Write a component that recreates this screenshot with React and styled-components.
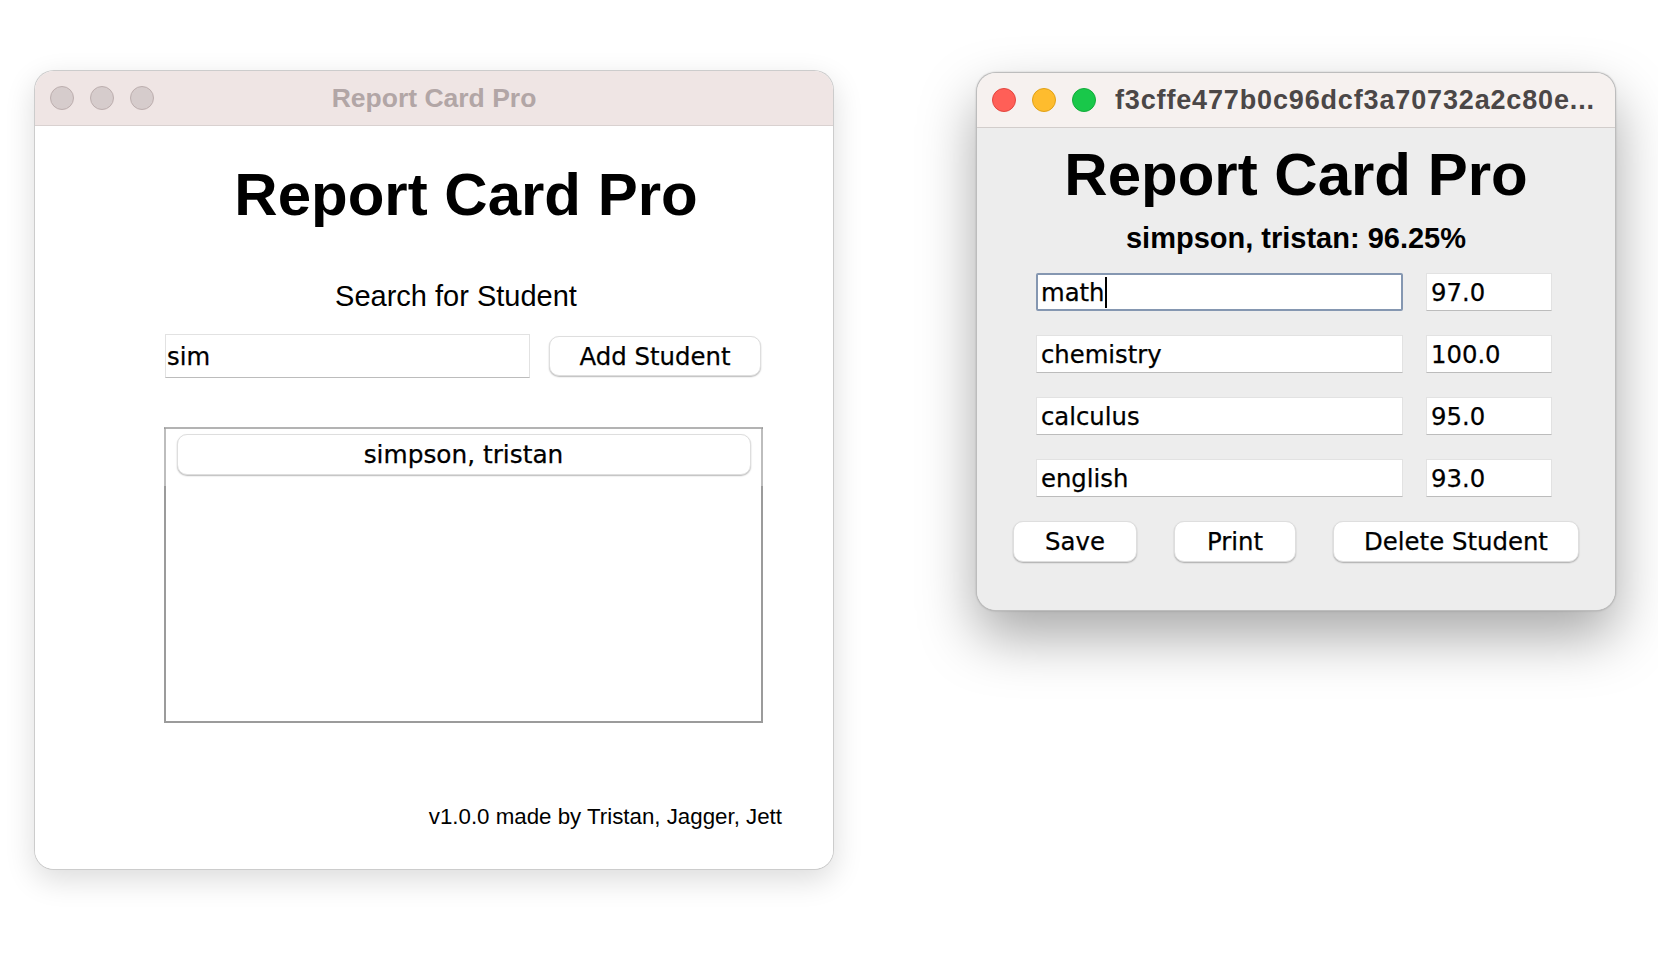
import React from 'react';
import styled, { createGlobalStyle } from 'styled-components';

const GlobalStyle = createGlobalStyle`
  html, body {
    margin: 0;
    padding: 0;
    background: #ffffff;
  }
  body {
    width: 1658px;
    height: 954px;
    overflow: hidden;
    font-family: "Liberation Sans", Arial, sans-serif;
  }
`;

const swingFont = '"DejaVu Sans", "Noto Sans", sans-serif';

const Desktop = styled.div`
  position: relative;
  width: 1658px;
  height: 954px;
  background: #ffffff;
`;

const Window = styled.section`
  position: absolute;
  left: ${(props) => props.$left}px;
  top: ${(props) => props.$top}px;
  width: ${(props) => props.$width}px;
  height: ${(props) => props.$height}px;
  box-sizing: border-box;
  display: flex;
  flex-direction: column;
  border-radius: 20px;
  overflow: hidden;
  background: ${(props) => props.$bg};
  border: 1px solid rgba(0, 0, 0, 0.2);
  box-shadow: ${(props) => (props.$active
    ? '0 26px 56px rgba(0, 0, 0, 0.34), 0 0 2px rgba(0, 0, 0, 0.2)'
    : '0 10px 30px rgba(0, 0, 0, 0.14)')};
`;

const TitleBar = styled.header`
  height: 54px;
  flex-shrink: 0;
  display: grid;
  grid-template-columns: ${(props) => (props.$centered ? '1fr auto 1fr' : 'auto 1fr')};
  align-items: center;
  padding: 0 15px;
  background: ${(props) => props.$bg};
  border-bottom: 1px solid ${(props) => props.$line};
`;

const Lights = styled.div`
  display: flex;
  gap: 16px;
`;

const Light = styled.span`
  width: 24px;
  height: 24px;
  box-sizing: border-box;
  border-radius: 50%;
  background: ${(props) => props.$fill};
  border: 1px solid ${(props) => props.$edge};
`;

const WindowTitle = styled.div`
  font-weight: 700;
  font-size: ${(props) => props.$size}px;
  letter-spacing: ${(props) => props.$spacing || 0}px;
  color: ${(props) => props.$color};
  white-space: nowrap;
  overflow: hidden;
  margin-left: ${(props) => props.$offset || 0}px;
`;

const LeftBody = styled.main`
  flex: 1;
  display: flex;
  flex-direction: column;
  align-items: center;
  padding-left: 58px;
  background: #ffffff;
`;

const RightBody = styled.main`
  flex: 1;
  display: flex;
  flex-direction: column;
  align-items: center;
  background: #ededed;
`;

const Heading = styled.h1`
  margin: ${(props) => props.$top}px 0 0 ${(props) => props.$shift || 0}px;
  font-size: 60px;
  line-height: 60px;
  font-weight: 700;
  color: #000;
`;

const Label = styled.div`
  margin-top: ${(props) => props.$top}px;
  margin-right: ${(props) => props.$shift || 0}px;
  font-size: 29px;
  line-height: 29px;
  font-weight: ${(props) => (props.$bold ? 700 : 400)};
  color: #000;
`;

const SearchRow = styled.div`
  margin-top: 23px;
  display: flex;
  align-items: center;
  gap: 19px;
`;

const Field = styled.div`
  width: ${(props) => props.$width}px;
  height: ${(props) => props.$height || 38}px;
  box-sizing: border-box;
  display: flex;
  align-items: center;
  padding-left: ${(props) => props.$pad ?? (props.$focused ? 3 : 4)}px;
  background: #ffffff;
  font-family: ${swingFont};
  font-size: 24.3px;
  -webkit-text-stroke: 0.25px #000;
  color: #000;
  white-space: nowrap;
  border: ${(props) => (props.$focused ? '2px solid #8597b1' : '1px solid #e2e2e2')};
  border-bottom-color: ${(props) => (props.$focused ? '#8597b1' : '#bcbcbc')};
  border-radius: ${(props) => (props.$focused ? 2 : 0)}px;
`;

const Caret = styled.span`
  width: 2px;
  height: 31px;
  margin-left: 1px;
  background: #000;
`;

const Button = styled.div`
  width: ${(props) => props.$width}px;
  height: ${(props) => props.$height || 40}px;
  box-sizing: border-box;
  display: flex;
  align-items: center;
  justify-content: center;
  background: #ffffff;
  border: 1px solid #dedede;
  border-radius: 10px;
  box-shadow: 0 1px 1.5px rgba(0, 0, 0, 0.28);
  font-family: ${swingFont};
  font-size: ${(props) => props.$size || 24.4}px;
  -webkit-text-stroke: 0.25px #000;
  color: #000;
  white-space: nowrap;
`;

const ListBox = styled.div`
  margin-top: 49px;
  width: 599px;
  height: 296px;
  box-sizing: border-box;
  background: #ffffff;
  border: 2px solid #9b9b9b;
  border-top-color: #b3b3b3;
`;

const ResultStrip = styled.div`
  height: 57px;
  box-sizing: border-box;
  padding: 5px 10px 11px 11px;
  background: #ffffff;
  box-shadow: -2px 0 0 #bdbdbd, 2px 0 0 #bdbdbd;
`;

const Footer = styled.div`
  margin-top: 83px;
  align-self: flex-end;
  margin-right: 51px;
  font-size: 22.3px;
  line-height: 22px;
  color: #000;
`;

const GradeList = styled.div`
  margin-top: 20px;
  align-self: stretch;
  padding-left: 59px;
  display: flex;
  flex-direction: column;
  gap: 24px;
`;

const GradeRow = styled.div`
  display: flex;
  gap: 23px;
`;

const ActionRow = styled.div`
  margin-top: 24px;
  align-self: stretch;
  padding: 0 36px;
  display: flex;
  justify-content: space-between;
`;

const grades = [
  { subject: 'math', score: '97.0', focused: true },
  { subject: 'chemistry', score: '100.0' },
  { subject: 'calculus', score: '95.0' },
  { subject: 'english', score: '93.0' },
];

const TrafficLights = ({ active }) => (
  <Lights>
    <Light $fill={active ? '#ff5f57' : '#d6cccc'} $edge={active ? '#e2463f' : '#bcaeae'} />
    <Light $fill={active ? '#febc2e' : '#d6cccc'} $edge={active ? '#e1a116' : '#bcaeae'} />
    <Light $fill={active ? '#19c84a' : '#d6cccc'} $edge={active ? '#12ac3a' : '#bcaeae'} />
  </Lights>
);

const SearchWindow = () => (
  <Window $left={34} $top={70} $width={800} $height={800} $bg="#ffffff">
    <TitleBar $centered $bg="#efe5e4" $line="#d9d1d0">
      <TrafficLights />
      <WindowTitle $size={26.5} $color="#b2a6a6">Report Card Pro</WindowTitle>
      <span />
    </TitleBar>
    <LeftBody>
      <Heading $top={39} $shift={6}>Report Card Pro</Heading>
      <Label $top={57} $shift={14}>Search for Student</Label>
      <SearchRow>
        <Field $width={365} $height={44} $pad={1}>sim</Field>
        <Button $width={212}>Add Student</Button>
      </SearchRow>
      <ListBox>
        <ResultStrip>
          <Button $width={574} $height={41} $size={24.8}>simpson, tristan</Button>
        </ResultStrip>
      </ListBox>
      <Footer>v1.0.0 made by Tristan, Jagger, Jett</Footer>
    </LeftBody>
  </Window>
);

const StudentWindow = () => (
  <Window $active $left={976} $top={72} $width={640} $height={539} $bg="#ededed">
    <TitleBar $bg="#f6f1ef" $line="#d2cdcb">
      <TrafficLights active />
      <WindowTitle $size={27} $spacing={0.85} $offset={19} $color="#4b4747">
        f3cffe477b0c96dcf3a70732a2c80e...
      </WindowTitle>
    </TitleBar>
    <RightBody>
      <Heading $top={17}>Report Card Pro</Heading>
      <Label $top={19} $bold>simpson, tristan: 96.25%</Label>
      <GradeList>
        {grades.map((g) => (
          <GradeRow key={g.subject}>
            <Field $width={367} $focused={g.focused}>
              {g.subject}
              {g.focused && <Caret />}
            </Field>
            <Field $width={126}>{g.score}</Field>
          </GradeRow>
        ))}
      </GradeList>
      <ActionRow>
        <Button $width={124} $height={41}>Save</Button>
        <Button $width={122} $height={41}>Print</Button>
        <Button $width={246} $height={41}>Delete Student</Button>
      </ActionRow>
    </RightBody>
  </Window>
);

const App = () => (
  <>
    <GlobalStyle />
    <Desktop>
      <SearchWindow />
      <StudentWindow />
    </Desktop>
  </>
);

export default App;
